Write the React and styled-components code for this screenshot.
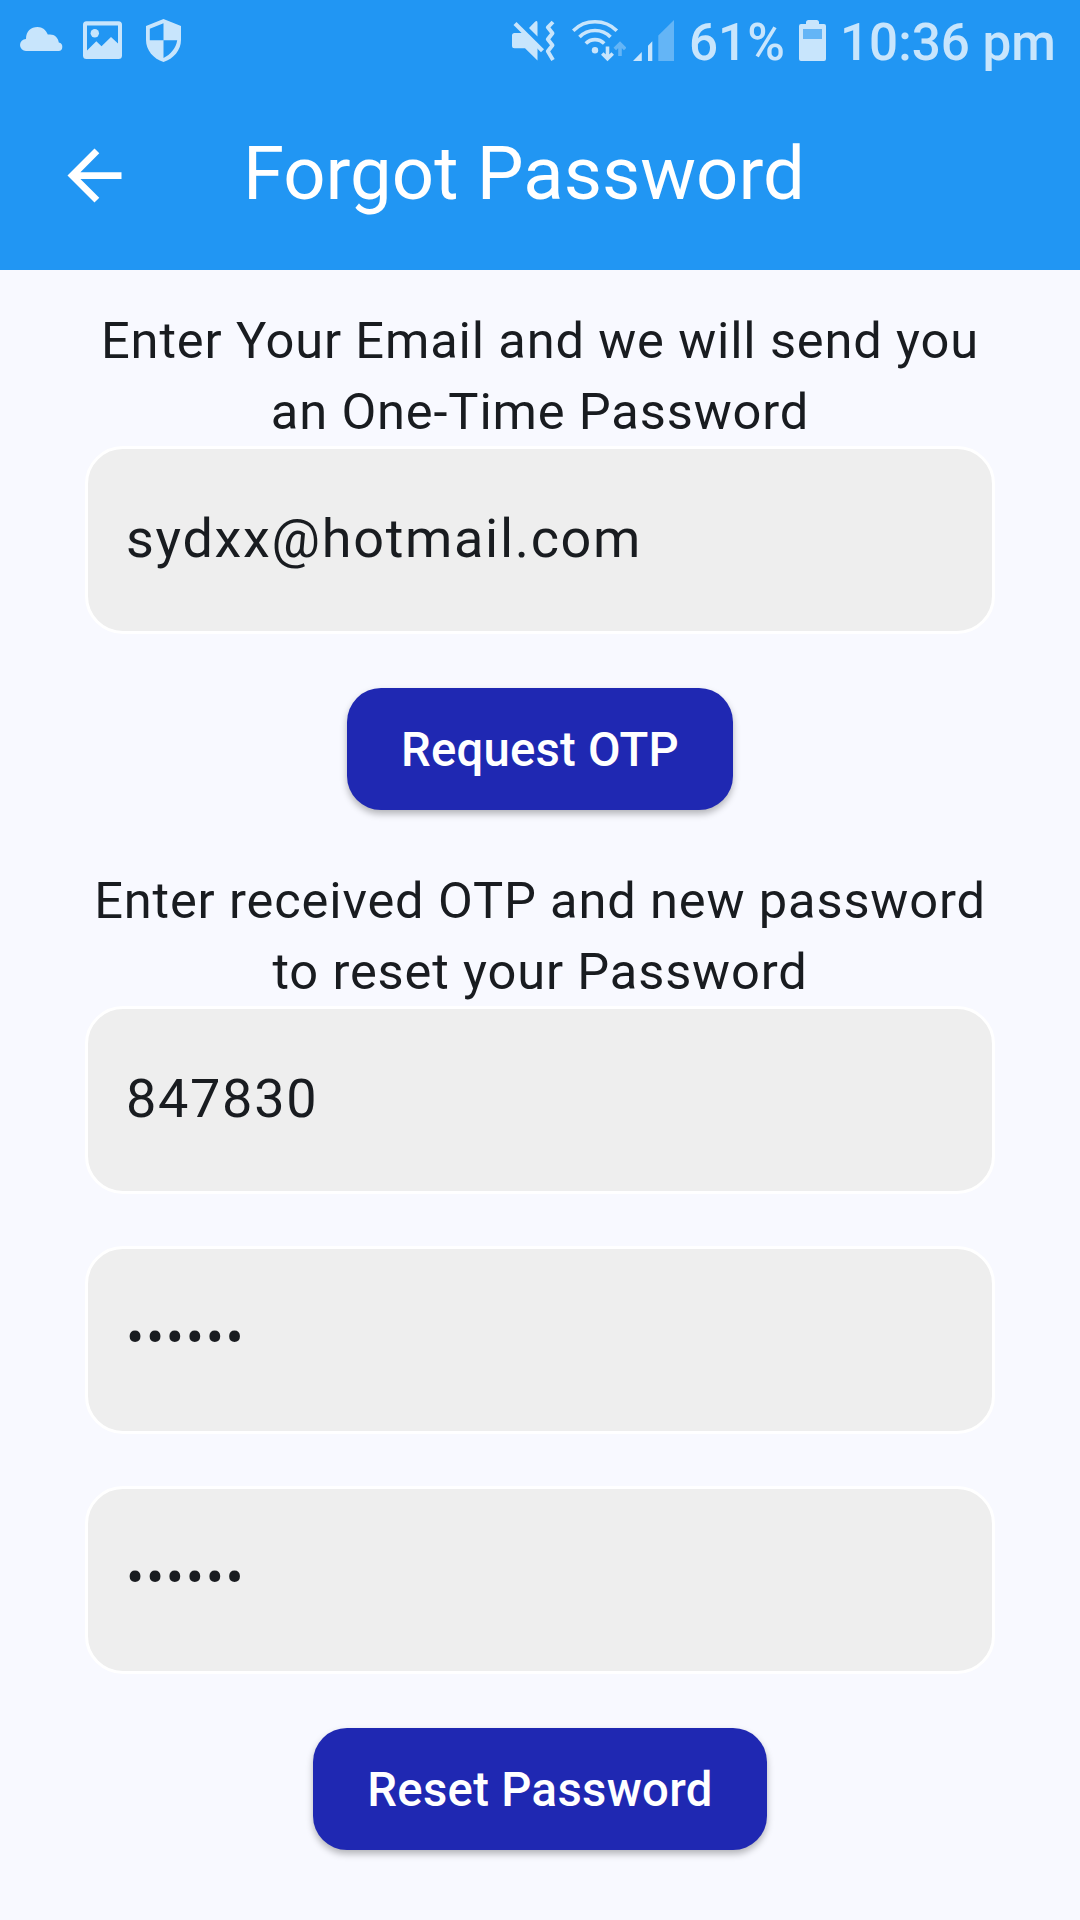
import React from 'react';
import styled, { createGlobalStyle } from 'styled-components';

const GlobalStyle = createGlobalStyle`
  *, *::before, *::after { box-sizing: border-box; }
  body {
    margin: 0;
    background: #f8f9ff;
    color: #191c20;
    font-family: Roboto, "Noto Sans", sans-serif;
  }
`;

const tint = '#c8e5fc';
const faint = '#64b5f6';

const Screen = styled.div`
  width: 1080px;
  height: 1920px;
  overflow: hidden;
  display: flex;
  flex-direction: column;
`;

const Header = styled.header`
  flex: none;
  height: 270px;
  background: #2196f3;
`;

const StatusBar = styled.div`
  display: flex;
  justify-content: space-between;
  height: 81px;
  padding: 18px 24px 0 20px;
  color: ${tint};
`;

const StatusGroup = styled.div`
  display: flex;
  align-items: flex-start;
`;

const Glyph = styled.svg`
  display: block;
  flex: none;
  height: 46px;
  margin-left: ${(p) => p.$before || 0}px;
  fill: ${tint};
`;

const StatusText = styled.span`
  width: ${(p) => p.$width}px;
  margin-left: ${(p) => p.$before || 0}px;
  font-size: 51.2px;
  font-weight: 500;
  line-height: 50px;
  white-space: nowrap;
`;

const AppBar = styled.div`
  display: flex;
  align-items: center;
  height: 189px;
  padding-left: 54px;
`;

const BackButton = styled.button`
  display: flex;
  width: 81px;
  height: 81px;
  padding: 0;
  border: 0;
  background: none;
`;

const Title = styled.h1`
  margin: 0 0 4px 108px;
  color: #fff;
  font-size: 74.25px;
  font-weight: 400;
  line-height: 94px;
  white-space: nowrap;
`;

const Form = styled.main`
  display: flex;
  flex-direction: column;
  align-items: center;
  padding: 35px 85px 0;
`;

const Prompt = styled.p`
  margin: ${(p) => p.$top || 0}px 0 -1px;
  font-size: 50.625px;
  line-height: 71px;
  letter-spacing: 0.84375px;
  text-align: center;
  white-space: nowrap;
`;

const Field = styled.div`
  display: flex;
  align-items: center;
  width: 910px;
  height: 188px;
  margin-top: ${(p) => p.$top || 0}px;
  padding: 0 38px ${(p) => (p.$masked ? 5 : 3)}px;
  border: 3px solid #fff;
  border-radius: 38px;
  background: #eee;
  font-size: 54px;
  letter-spacing: 1.6875px;
`;

const Button = styled.button`
  width: ${(p) => p.$width}px;
  height: 122px;
  margin-top: 54px;
  padding: 2px 0 0;
  border: 0;
  border-radius: 34px;
  background: #1f28b2;
  box-shadow: 0 4px 7px rgba(0, 0, 0, 0.28);
  color: #fff;
  font-family: inherit;
  font-size: 47.25px;
  font-weight: 500;
  letter-spacing: ${(p) => p.$track || 0.3375}px;
`;

const CloudIcon = () => (
  <Glyph width="43" viewBox="20 18 43 46">
    <path d="M26 51a6 6 0 0 1 0-12C26 31 31 27 37.500 27c5 0 8.500 3 10.300 7.600C54 33.500 58 37 58.800 42.500A4.300 4.300 0 0 1 58.500 51Z" />
  </Glyph>
);

const ImageIcon = () => (
  <Glyph $before={20} width="39" viewBox="83 18 39 46">
    <path fillRule="evenodd" d="M86.500 21.300h32a3.500 3.500 0 0 1 3.500 3.500v30.700a3.500 3.500 0 0 1-3.500 3.500h-32a3.500 3.500 0 0 1-3.500-3.500V24.800a3.500 3.500 0 0 1 3.500-3.500ZM87 25.500V50.500l9.300-9.200 5.200 5L111 37l7 6.500v-18Z" />
    <circle cx="94.800" cy="33.300" r="4.200" />
  </Glyph>
);

const ShieldIcon = () => (
  <Glyph $before={24} width="35" viewBox="146 18 35 46">
    <path fillRule="evenodd" d="M163.500 19l17.500 7v14c0 10-7.500 19-17.500 22-10-3-17.500-12-17.500-22V26ZM163.500 23.200L149.800 28.700V40.300H163.500ZM163.500 40.300V58c7-3.300 12.500-9.700 13.700-17.700Z" />
  </Glyph>
);

const MuteIcon = () => (
  <Glyph width="43" viewBox="512 18 43 46">
    <path d="M514.500 33H524.500L537.500 46V60.500L525 48.300H514.500a2.500 2.500 0 0 1-2.500-2.500V35.500a2.500 2.500 0 0 1 2.500-2.500ZM529 28L534.500 22.300Q537.500 19.500 537.500 23V36.500Z" />
    <path d="M515 23.500L542.500 50.800" fill="none" stroke={tint} strokeWidth="4.200" />
    <path d="M553 22L547.800 27.300 552.500 33.300 547.800 39.300 552.500 45.300 547.800 51.300 553 60" fill="none" stroke={tint} strokeWidth="3.900" strokeLinejoin="round" />
  </Glyph>
);

const WifiIcon = () => (
  <Glyph $before={17} width="54" viewBox="572 18 54 46">
    <g fill="none" stroke={tint} strokeWidth="3.600">
      <path d="M573.200 30.800C585 18.800 605 18.800 616.800 30.800" />
      <path d="M579.500 37C588 28.300 602 28.300 610.500 37" />
      <path d="M585.800 43.500C591 38.300 599 38.300 604.200 43.500" />
      <path d="M607.500 46.500V58M602.300 53.500L607.500 58.700 612.700 53.500" />
      <path d="M620 56V44.500M614.800 49L620 43.800 625.200 49" stroke={faint} />
    </g>
    <circle cx="595" cy="50.300" r="3.200" />
  </Glyph>
);

const SignalIcon = () => (
  <Glyph $before={7} width="41" viewBox="633 18 41 46">
    <path d="M633 61L641.800 52V61ZM648 61V45.800L652.300 41.300V61Z" />
    <path fill={faint} d="M658.300 61V35.500L674 20V61Z" />
  </Glyph>
);

const BatteryIcon = () => (
  <Glyph $before={15} width="27" viewBox="799 18 27 46">
    <path d="M801 24h5v-1.500a2.500 2.500 0 0 1 2.500-2.500h8a2.500 2.500 0 0 1 2.500 2.500V24h5a2 2 0 0 1 2 2V59a2 2 0 0 1-2 2h-23a2 2 0 0 1-2-2V26a2 2 0 0 1 2-2Z" />
    <path fill={faint} d="M803 29h19v10h-19Z" />
  </Glyph>
);

const BackIcon = () => (
  <svg width="81" height="81" viewBox="0 0 24 24" fill="#fff">
    <path d="M20 11H7.830l5.590-5.590L12 4l-8 8 8 8 1.410-1.410L7.830 13H20v-2Z" />
  </svg>
);

export default function App() {
  return (
    <>
      <GlobalStyle />
      <Screen>
        <Header>
          <StatusBar>
            <StatusGroup>
              <CloudIcon />
              <ImageIcon />
              <ShieldIcon />
            </StatusGroup>
            <StatusGroup>
              <MuteIcon />
              <WifiIcon />
              <SignalIcon />
              <StatusText $before={15} $width={95}>61%</StatusText>
              <BatteryIcon />
              <StatusText $before={14} $width={216}>10:36 pm</StatusText>
            </StatusGroup>
          </StatusBar>
          <AppBar>
            <BackButton aria-label="Back">
              <BackIcon />
            </BackButton>
            <Title>Forgot Password</Title>
          </AppBar>
        </Header>
        <Form>
          <Prompt>
            Enter Your Email and we will send you
            <br />
            an One-Time Password
          </Prompt>
          <Field>sydxx@hotmail.com</Field>
          <Button $width={386.6} $track={0.2}>Request OTP</Button>
          <Prompt $top={55}>
            Enter received OTP and new password
            <br />
            to reset your Password
          </Prompt>
          <Field>847830</Field>
          <Field $masked $top={52}>••••••</Field>
          <Field $masked $top={52}>••••••</Field>
          <Button $width={454}>Reset Password</Button>
        </Form>
      </Screen>
    </>
  );
}
